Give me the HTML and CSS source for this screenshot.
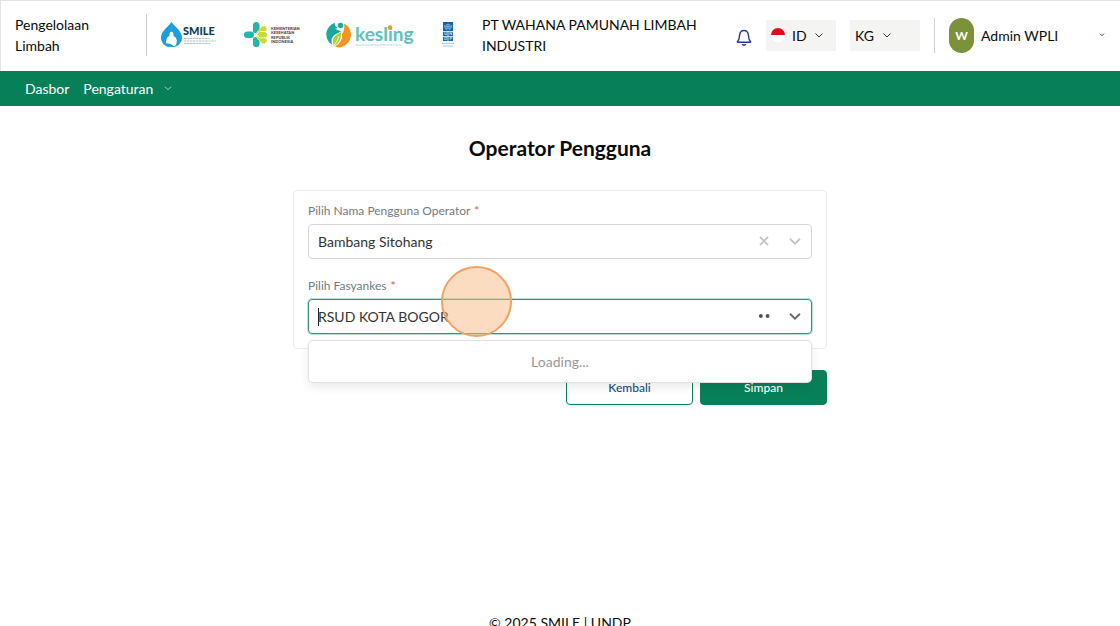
FILE: index.html
```html
<!DOCTYPE html>
<html lang="id">
<head>
<meta charset="utf-8">
<meta name="viewport" content="width=device-width, initial-scale=1">
<title>Operator Pengguna</title>
<link rel="stylesheet" href="styles.css">
</head>
<body>
<div class="app">
  <header class="header">
    <div class="app-name">Pengelolaan Limbah</div>
    <div class="brand">
      <svg class="logo-smile" viewBox="0 0 56 26" role="img" aria-label="SMILE">
        <path d="M10.500 0C8 4 0 9 0 15.500C0 20 3 24 7.500 25C9.500 24.500 12 25.500 14 24.800C18 23.500 21 20 21 15.500C21 9 13 4 10.500 0Z" fill="#1a9fda"/>
        <path d="M8.800 11Q10.500 8.500 12.200 11L12.600 14Q15.500 15 16 18.500L15 23Q13 25 11.500 23.500Q8 21.500 5.500 21.500Q4.500 20 5.500 17Q6 15 8.400 14Z" fill="#fff"/>
        <path d="M6 21.500Q10 21 12.500 24.500Q9 25.500 6 21.500Z" fill="#1a9fda"/>
        <text x="22" y="13" font-size="11" font-weight="900" fill="#123c50">SMILE</text>
        <path d="M23 16.500H49M23 19H55M23 21.500H50" stroke="#b4c4cc" stroke-width="1" stroke-dasharray="2 .5 3 .6"/>
      </svg>
      <svg class="logo-kemenkes" viewBox="0 0 56 26" role="img" aria-label="Kementerian Kesehatan Republik Indonesia">
        <g fill="#24b4a8">
          <rect x="0" y="9.500" width="10" height="6.500" rx="3.250"/>
          <path d="M9 9V3.500Q9 0 12.300 0Q15.500 0 15.500 3.500V7L12 11Q9 11 9 9ZM9 17V22Q9 25 12.300 25Q15.500 25 15.500 22V19L12 15Q9 15 9 17Z"/>
        </g>
        <g fill="#c9dc29">
          <path d="M15.500 10L13 12.500L15.500 15.500H20Q23 15.500 23 12.800Q23 10 20 10Z"/>
          <path d="M11 12.700L17 5.500Q19.500 3 21.500 4.500Q24 7 21.500 9.200L16 9.200ZM11 12.700L17 20Q19.500 22.500 21.500 21Q24 18.500 21.500 16.300L16 16.300Z"/>
        </g>
        <g font-size="4" font-weight="900" fill="#4c4447">
          <text x="27" y="7.500">KEMENTERIAN</text>
          <text x="27" y="12">KESEHATAN</text>
          <text x="27" y="16.500">REPUBLIK</text>
          <text x="27" y="21">INDONESIA</text>
        </g>
      </svg>
      <svg class="logo-kesling" viewBox="0 0 90 26" role="img" aria-label="kesling">
        <path d="M9 .8A12.500 12.500 0 0 0 6 22.500Q4 16 9 12.500Q13 10.500 15 9Q10 9 8 6Q10 7 12 6Q8 4 9 .8Z" fill="#19a99d"/>
        <path d="M7 2Q0 6 .3 13Q1 19 5 22Q3 15 9 12L15 9Q9 9 7 2Z" fill="#19a99d"/>
        <circle cx="14.500" cy="3.500" r="2.800" fill="#19a99d"/>
        <path d="M18 1.500Q25 5 25 13Q24 23 14 25.500Q11 25.500 9 24.500Q17 20 16 12Q19 8 18 1.500Z" fill="#f7941e"/>
        <path d="M15 10Q16 20 8 24Q4 15 15 10Z" fill="#afd136"/>
        <path d="M13 14Q12 19 8 23" fill="none" stroke="#fff" stroke-width=".8"/>
        <text x="29" y="19" font-size="19" font-weight="700" fill="#60c1b8">kesling</text>
        <circle cx="64" cy="5.500" r="2.200" fill="#f7941e"/>
        <path d="M30 23H76" stroke="#a5d8d3" stroke-width="1" stroke-dasharray="2 .5 3 .6"/>
      </svg>
      <svg class="logo-undp" viewBox="0 0 12 26" role="img" aria-label="UNDP">
        <path d="M1 0H11V9H1ZM1 9.800H5.600V14H1ZM6.400 9.800H11V14H6.400ZM1 14.800H5.600V19H1ZM6.400 14.800H11V19H6.400Z" fill="#1764ab"/>
        <g fill="none" stroke="#9bc4e8" stroke-width=".7"><circle cx="6" cy="4.500" r="2.300"/><path d="M3.800 4.500H8.200M6 2.200V6.800M2.500 3Q2 7 5 7.800M9.500 3Q10 7 7 7.800"/></g>
        <g font-size="4" font-weight="700" fill="#d8e9f7"><text x="2" y="13.300">U</text><text x="7.200" y="13.300">N</text><text x="2" y="18.300">D</text><text x="7.500" y="18.300">P</text></g>
        <path d="M0 21.500H12M1 24H11" stroke="#a9c6de" stroke-width="1"/>
      </svg>
      <div class="company">PT WAHANA PAMUNAH LIMBAH INDUSTRI</div>
    </div>
    <button class="bell" type="button" aria-label="Notifikasi">
      <svg viewBox="0 0 16 18"><path d="M1.500 12.500C3.500 11 3.300 8.500 3.500 6.500C3.800 3.500 5.500 1.500 8 1.500S12.200 3.500 12.500 6.500C12.700 8.500 12.500 11 14.500 12.500Q15 13.200 14 13.200H2Q1 13.200 1.500 12.500Z" fill="none" stroke="#24388f" stroke-width="1.400" stroke-linejoin="round"/><path d="M6 15.500H10L9 16.500H7Z" fill="#24388f" stroke="#24388f" stroke-width=".6"/></svg>
    </button>
    <div class="picker picker-language">
      <svg class="flag" viewBox="0 0 14 14"><circle cx="7" cy="7" r="7" fill="#fff"/><path d="M0 7A7 7 0 0 1 14 7Z" fill="#e30b17"/></svg>
      <select aria-label="Bahasa"><option>ID</option></select>
      <svg class="chevron" viewBox="0 0 8 5"><path d="M.5.5L4 4L7.500.5"/></svg>
    </div>
    <div class="picker picker-unit">
      <select aria-label="Satuan"><option>KG</option></select>
      <svg class="chevron" viewBox="0 0 8 5"><path d="M.5.5L4 4L7.500.5"/></svg>
    </div>
    <button class="account" type="button">
      <span class="avatar">W</span>
      <span class="account-name">Admin WPLI</span>
      <svg class="account-chevron" viewBox="0 0 6 4"><path d="M1 .7L3 2.700L5 .7"/></svg>
    </button>
  </header>

  <nav class="nav">
    <a href="#">Dasbor</a>
    <a href="#">Pengaturan <svg viewBox="0 0 8 5"><path d="M1 .8L4 3.800L7 .8"/></svg></a>
  </nav>

  <main class="main">
    <h1>Operator Pengguna</h1>
    <form class="form">
      <div class="card">
        <div class="field">
          <label for="operator">Pilih Nama Pengguna Operator <span>*</span></label>
          <div class="control">
            <input id="operator" type="text" value="Bambang Sitohang" autocomplete="off">
            <button type="button" aria-label="Hapus"><svg viewBox="0 0 20 20"><path d="M5.500 5.500L14.500 14.500M14.500 5.500L5.500 14.500"/></svg></button>
            <button type="button" aria-label="Buka pilihan operator"><svg viewBox="0 0 20 20"><path d="M4.500 7.500L10 13L15.500 7.500"/></svg></button>
          </div>
        </div>
        <div class="field">
          <label for="facility">Pilih Fasyankes <span>*</span></label>
          <div class="control control-active">
            <input id="facility" type="text" value="RSUD KOTA BOGOR" autocomplete="off">
            <svg class="loading" viewBox="0 0 20 20" aria-hidden="true"><circle cx="6.500" cy="10" r="2.200"/><circle cx="14" cy="10" r="2.200"/></svg>
            <button type="button" aria-label="Buka pilihan fasyankes"><svg viewBox="0 0 20 20"><path d="M4.500 7.500L10 13L15.500 7.500"/></svg></button>
            <div class="menu" role="status">Loading...</div>
            <div class="click-marker"></div>
          </div>
        </div>
      </div>
      <div class="actions">
        <button class="button button-outline" type="button">Kembali</button>
        <button class="button button-solid" type="submit">Simpan</button>
      </div>
    </form>
  </main>
  <footer class="footer">© 2025 SMILE | UNDP</footer>
</div>
</body>
</html>
```

FILE: styles.css
```css
* { box-sizing: border-box; }

body {
  margin: 0;
  background: #fff;
  color: #0a0a0a;
  font-family: Lato, "Noto Sans", sans-serif;
  font-size: 14px;
  line-height: 21px;
}

button, input, select { font: inherit; color: inherit; }
button { border: 0; padding: 0; background: none; }
svg { display: block; flex-shrink: 0; }

.app {
  display: flex;
  flex-direction: column;
  height: 100vh;
  overflow: hidden;
}

.header {
  display: flex;
  align-items: center;
  flex-shrink: 0;
  height: 71px;
  padding: 0 15px 2px 14px;
  border-top: 1px solid #e3e3e3;
  border-left: 1px solid #e3e3e3;
}

.app-name {
  width: 131px;
  padding-right: 40px;
}

.brand {
  display: flex;
  align-items: center;
  flex: 1;
  height: 42px;
  padding-left: 14px;
  border-left: 1px solid #cfcfcf;
}

.logo-smile { width: 56px; height: 26px; margin-right: 27px; }
.logo-kemenkes { width: 56px; height: 26px; margin-right: 26px; }
.logo-kesling { width: 90px; height: 26px; margin-right: 26px; }
.logo-undp { width: 12px; height: 26px; margin-right: 28px; }
.company { flex: 1; max-width: 230px; }

.bell { margin: 6px 14px 0 0; }
.bell svg { width: 16px; height: 18px; }

.picker {
  position: relative;
  width: 70px;
  height: 31px;
  margin-right: 14px;
}

.picker select {
  width: 100%;
  height: 100%;
  padding: 0 5px;
  border: 0;
  border-radius: 0;
  background: #f4f4f2;
  appearance: none;
}

.picker-language select { padding-left: 26px; }
.flag { position: absolute; left: 5px; top: 8px; width: 14px; height: 14px; }
.chevron { position: absolute; left: 33px; top: 13px; width: 8px; height: 5px; }
.picker-language .chevron { left: 49px; }
.chevron path { fill: none; stroke: #333; }

.account {
  display: flex;
  align-items: center;
  gap: 7px;
  width: 171px;
  height: 35px;
  padding-left: 14px;
  border-left: 1px solid #d4d4d4;
}

.avatar {
  width: 25px;
  height: 35px;
  border-radius: 13px;
  background: #7b913a;
  color: #fff;
  font-size: 12px;
  font-weight: 700;
  line-height: 35px;
  text-align: center;
}

.account-name { flex: 1; text-align: left; }
.account-chevron { width: 6px; height: 4px; }
.account-chevron path { fill: none; stroke: #355062; }

.nav {
  display: flex;
  align-items: center;
  flex-shrink: 0;
  gap: 14px;
  height: 35px;
  padding: 0 25px;
  background: #07805a;
}

.nav a {
  display: flex;
  align-items: center;
  gap: 11px;
  color: #fff;
  text-decoration: none;
}

.nav svg { width: 8px; height: 5px; }
.nav path { fill: none; stroke: #a5d5c4; }

.main {
  flex: 1 0 auto;
  padding: 28px 14px;
}

h1 {
  margin: 0 0 28px;
  font-size: 21px;
  font-weight: 700;
  line-height: 28px;
  text-align: center;
}

.form {
  width: 100%;
  max-width: 534px;
  margin: 0 auto;
}

.card {
  display: flex;
  flex-direction: column;
  gap: 19px;
  padding: 12px 14px 14px;
  border: 1px solid #ebebeb;
  border-radius: 4px;
}

.field label {
  display: block;
  margin-bottom: 5px;
  color: #737b80;
  font-size: 12px;
  line-height: 16px;
}

.field label span { margin-left: 1px; color: #e05252; }

.control {
  position: relative;
  display: flex;
  align-items: center;
  height: 35px;
  padding: 0 7px 1px 9px;
  border: 1px solid #d4d4d4;
  border-radius: 4px;
}

.control input {
  flex: 1;
  min-width: 0;
  padding: 0;
  border: 0;
  outline: 0;
  background: none;
  color: #333;
}

.control svg { width: 18px; height: 18px; margin-left: 13px; }
.control path { fill: none; stroke: #c4c4c4; stroke-width: 2; }

.control-active {
  border-color: #3f8b75;
  box-shadow: 0 0 0 1px #b4e2d1;
}

.control-active path { stroke: #666; }
.loading { fill: #555; }

.control-active::before {
  content: "";
  position: absolute;
  left: 9px;
  top: 8px;
  width: 1px;
  height: 18px;
  background: #222;
}

.menu {
  position: absolute;
  z-index: 1;
  top: 41px;
  left: 0;
  right: 0;
  padding: 10px;
  border-radius: 4px;
  background: #fff;
  box-shadow: 0 0 0 1px #e2e2e2, 0 4px 11px #0000001a;
  color: #999;
  text-align: center;
}

.click-marker {
  position: absolute;
  z-index: 2;
  top: -34px;
  left: 132px;
  width: 71px;
  height: 71px;
  border: 2px solid #f1a366;
  border-radius: 50%;
  background: #f9b98280;
}

.actions {
  display: flex;
  justify-content: flex-end;
  gap: 7px;
  margin-top: 21px;
}

.button {
  width: 127px;
  height: 35px;
  padding-bottom: 1px;
  border: 1px solid #07805a;
  border-radius: 4px;
  font-size: 12px;
  font-weight: 500;
}

.button-outline { color: #174d80; }
.button-solid { background: #07805a; color: #fff; }

.footer {
  flex-shrink: 0;
  height: 14px;
  text-align: center;
}
```
